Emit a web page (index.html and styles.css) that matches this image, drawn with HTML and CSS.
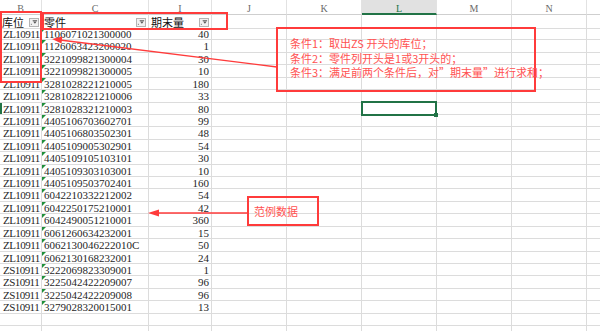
FILE: index.html
```html
<!DOCTYPE html>
<html lang="zh-CN">
<head>
<meta charset="utf-8">
<title>sheet</title>
<link rel="stylesheet" href="styles.css">
</head>
<body>
<div class="page">
  <div class="sheet">
    <div class="row cols">
      <div class="c">B</div><div class="c">C</div><div class="c">I</div><div class="c">J</div><div class="c">K</div><div class="c active">L</div><div class="c">M</div><div class="c">N</div><div class="c"></div>
    </div>
    <div class="row head">
      <div class="c hc"><span class="ht">库位</span><span class="flt"><svg width="9" height="7" viewBox="0 0 9 7"><rect x="1" y="5" width="1" height="1" fill="#555"/><rect x="3" y="1" width="5" height="1" fill="#555"/><path d="M3.5 2.5h4l-2 2.5z" fill="#555"/></svg></span></div>
      <div class="c hc"><span class="ht">零件</span><span class="flt"><svg width="9" height="7" viewBox="0 0 9 7"><rect x="1" y="5" width="1" height="1" fill="#555"/><rect x="3" y="1" width="5" height="1" fill="#555"/><path d="M3.5 2.5h4l-2 2.5z" fill="#555"/></svg></span></div>
      <div class="c hc"><span class="ht">期末量</span><span class="flt"><svg width="9" height="7" viewBox="0 0 9 7"><rect x="1" y="5" width="1" height="1" fill="#555"/><rect x="3" y="1" width="5" height="1" fill="#555"/><path d="M3.5 2.5h4l-2 2.5z" fill="#555"/></svg></span></div>
      <div class="c"></div><div class="c"></div><div class="c"></div><div class="c"></div><div class="c"></div><div class="c"></div>
    </div>
    <div class="row"><div class="c id">ZL10911</div><div class="c code">1106071021300000</div><div class="c num">40</div><div class="c"></div><div class="c"></div><div class="c"></div><div class="c"></div><div class="c"></div><div class="c"></div></div>
    <div class="row"><div class="c id">ZL10911</div><div class="c code">1126063423200020</div><div class="c num">1</div><div class="c"></div><div class="c"></div><div class="c"></div><div class="c"></div><div class="c"></div><div class="c"></div></div>
    <div class="row"><div class="c id">ZL10911</div><div class="c code">3221099821300004</div><div class="c num">30</div><div class="c"></div><div class="c"></div><div class="c"></div><div class="c"></div><div class="c"></div><div class="c"></div></div>
    <div class="row"><div class="c id">ZL10911</div><div class="c code">3221099821300005</div><div class="c num">10</div><div class="c"></div><div class="c"></div><div class="c"></div><div class="c"></div><div class="c"></div><div class="c"></div></div>
    <div class="row"><div class="c id">ZL10911</div><div class="c code">3281028221210005</div><div class="c num">180</div><div class="c"></div><div class="c"></div><div class="c"></div><div class="c"></div><div class="c"></div><div class="c"></div></div>
    <div class="row"><div class="c id">ZL10911</div><div class="c code">3281028221210006</div><div class="c num">33</div><div class="c"></div><div class="c"></div><div class="c"></div><div class="c"></div><div class="c"></div><div class="c"></div></div>
    <div class="row"><div class="c id rowsel">ZL10911</div><div class="c code">3281028321210003</div><div class="c num">80</div><div class="c"></div><div class="c"></div><div class="c sel"></div><div class="c"></div><div class="c"></div><div class="c"></div></div>
    <div class="row"><div class="c id">ZL10911</div><div class="c code">4405106703602701</div><div class="c num">99</div><div class="c"></div><div class="c"></div><div class="c"></div><div class="c"></div><div class="c"></div><div class="c"></div></div>
    <div class="row"><div class="c id">ZL10911</div><div class="c code">4405106803502301</div><div class="c num">48</div><div class="c"></div><div class="c"></div><div class="c"></div><div class="c"></div><div class="c"></div><div class="c"></div></div>
    <div class="row"><div class="c id">ZL10911</div><div class="c code">4405109005302901</div><div class="c num">54</div><div class="c"></div><div class="c"></div><div class="c"></div><div class="c"></div><div class="c"></div><div class="c"></div></div>
    <div class="row"><div class="c id">ZL10911</div><div class="c code">4405109105103101</div><div class="c num">30</div><div class="c"></div><div class="c"></div><div class="c"></div><div class="c"></div><div class="c"></div><div class="c"></div></div>
    <div class="row"><div class="c id">ZL10911</div><div class="c code">4405109303103001</div><div class="c num">10</div><div class="c"></div><div class="c"></div><div class="c"></div><div class="c"></div><div class="c"></div><div class="c"></div></div>
    <div class="row"><div class="c id">ZL10911</div><div class="c code">4405109503702401</div><div class="c num">160</div><div class="c"></div><div class="c"></div><div class="c"></div><div class="c"></div><div class="c"></div><div class="c"></div></div>
    <div class="row"><div class="c id">ZL10911</div><div class="c code">6042210332212002</div><div class="c num">54</div><div class="c"></div><div class="c"></div><div class="c"></div><div class="c"></div><div class="c"></div><div class="c"></div></div>
    <div class="row"><div class="c id">ZL10911</div><div class="c code">6042250175210001</div><div class="c num">42</div><div class="c"></div><div class="c"></div><div class="c"></div><div class="c"></div><div class="c"></div><div class="c"></div></div>
    <div class="row"><div class="c id">ZL10911</div><div class="c code">6042490051210001</div><div class="c num">360</div><div class="c"></div><div class="c"></div><div class="c"></div><div class="c"></div><div class="c"></div><div class="c"></div></div>
    <div class="row"><div class="c id">ZL10911</div><div class="c code">6061260634232001</div><div class="c num">15</div><div class="c"></div><div class="c"></div><div class="c"></div><div class="c"></div><div class="c"></div><div class="c"></div></div>
    <div class="row"><div class="c id">ZL10911</div><div class="c code">6062130046222010C</div><div class="c num">50</div><div class="c"></div><div class="c"></div><div class="c"></div><div class="c"></div><div class="c"></div><div class="c"></div></div>
    <div class="row"><div class="c id">ZL10911</div><div class="c code">6062130168232001</div><div class="c num">24</div><div class="c"></div><div class="c"></div><div class="c"></div><div class="c"></div><div class="c"></div><div class="c"></div></div>
    <div class="row"><div class="c id">ZS10911</div><div class="c code">3222069823309001</div><div class="c num">1</div><div class="c"></div><div class="c"></div><div class="c"></div><div class="c"></div><div class="c"></div><div class="c"></div></div>
    <div class="row"><div class="c id">ZS10911</div><div class="c code">3225042422209007</div><div class="c num">96</div><div class="c"></div><div class="c"></div><div class="c"></div><div class="c"></div><div class="c"></div><div class="c"></div></div>
    <div class="row"><div class="c id">ZS10911</div><div class="c code">3225042422209008</div><div class="c num">96</div><div class="c"></div><div class="c"></div><div class="c"></div><div class="c"></div><div class="c"></div><div class="c"></div></div>
    <div class="row"><div class="c id">ZS10911</div><div class="c code">3279028320015001</div><div class="c num">13</div><div class="c"></div><div class="c"></div><div class="c"></div><div class="c"></div><div class="c"></div><div class="c"></div></div>
    <div class="row"><div class="c"></div><div class="c"></div><div class="c"></div><div class="c"></div><div class="c"></div><div class="c"></div><div class="c"></div><div class="c"></div><div class="c"></div></div>
    <div class="row"><div class="c"></div><div class="c"></div><div class="c"></div><div class="c"></div><div class="c"></div><div class="c"></div><div class="c"></div><div class="c"></div><div class="c"></div></div>
  </div>

  <div class="mark box-id"></div>
  <div class="mark box-head"></div>
  <div class="mark note">
    <p>条件1：取出ZS 开头的库位；</p>
    <p>条件2：零件列开头是1或3开头的；</p>
    <p>条件3：满足前两个条件后，对”期末量”进行求和；</p>
  </div>
  <div class="mark demo">范例数据</div>
  <svg class="arrows" width="600" height="331" viewBox="0 0 600 331">
    <line x1="277" y1="67" x2="60" y2="40" stroke="#ff3b3b" stroke-width="1.4"/>
    <path d="M52 39 L62.3 36.6 L61.5 43.6 Z" fill="#ff3b3b"/>
    <line x1="247" y1="213" x2="157" y2="213" stroke="#ff3b3b" stroke-width="1.6"/>
    <path d="M148 213 L159 209.5 L159 216.5 Z" fill="#ff3b3b"/>
  </svg>
</div>
</body>
</html>
```

FILE: styles.css
```css
html, body {
  margin: 0;
  padding: 0;
  background: #fff;
}
body {
  width: 600px;
  height: 331px;
  overflow: hidden;
}
.page {
  position: relative;
  width: 600px;
  height: 331px;
  overflow: hidden;
}
.sheet {
  display: flex;
  flex-direction: column;
  font-family: "Liberation Serif", serif;
  font-size: 11px;
  color: #1f1f1f;
}
.row {
  display: grid;
  grid-template-columns: 42px 107px 63px 75px 75px 75px 75px 75px 75px;
  height: 12.43px;
  flex: none;
}
.c {
  box-sizing: border-box;
  border-right: 1px solid #dcdcdc;
  border-bottom: 1px solid #dcdcdc;
  overflow: hidden;
  white-space: nowrap;
  line-height: 12px;
  position: relative;
}
.cols {
  height: 15px;
}
.cols .c {
  text-align: center;
  font-size: 10px;
  line-height: 9px;
  padding-top: 4px;
  color: #6a6a6a;
  border-bottom: 1px solid #cfcfcf;
  border-right-color: #e2e2e2;
}
.cols .active {
  background: #e1e1e1;
  border-bottom: 2px solid #217346;
  color: #217346;
}
.head {
  height: 13px;
}
.hc {
  display: flex;
  justify-content: space-between;
  align-items: flex-start;
  padding: 1.5px 1px 0 2px;
  overflow: visible;
  font-family: "Noto Sans CJK SC", sans-serif;
  font-size: 11px;
  color: #111;
}
.ht {
  display: block;
  line-height: 11px;
  height: 11px;
}
.flt {
  display: flex;
  align-items: center;
  justify-content: center;
  width: 10px;
  height: 9px;
  box-sizing: border-box;
  border: 1px solid #b4b4b4;
  background: #f1f1f1;
  margin: 1px 1px 0 0;
}
.id {
  padding-left: 3px;
  letter-spacing: -0.55px;
}
.code {
  padding-left: 2px;
}
.code::before {
  content: "";
  position: absolute;
  left: 0;
  top: 0;
  border-top: 4px solid #1f8f3a;
  border-right: 4px solid transparent;
}
.num {
  text-align: right;
  padding-right: 2px;
}
.rowsel {
  box-shadow: inset 2px 0 0 #217346;
}
.sel {
  overflow: visible;
}
.sel::after {
  content: "";
  position: absolute;
  left: -1px;
  top: -2px;
  right: -1px;
  bottom: -2px;
  border: 2px solid #217346;
  z-index: 2;
}
.sel::before {
  content: "";
  position: absolute;
  right: -2px;
  bottom: -3px;
  width: 4px;
  height: 4px;
  background: #217346;
  z-index: 3;
}
.mark {
  position: absolute;
  box-sizing: border-box;
  border: 2px solid #ff3b3b;
  z-index: 4;
}
.box-id {
  left: 0;
  top: 11px;
  width: 42px;
  height: 72px;
}
.box-head {
  left: 42px;
  top: 12px;
  width: 186px;
  height: 18px;
}
.note {
  left: 276px;
  top: 27px;
  width: 260px;
  height: 65px;
  padding: 7px 0 0 12px;
  font-family: "Noto Sans CJK SC", sans-serif;
  font-size: 11px;
  line-height: 14.5px;
  color: #ff5252;
}
.note p {
  margin: 0;
  white-space: nowrap;
}
.demo {
  left: 247px;
  top: 196px;
  width: 72px;
  height: 30px;
  padding: 6px 0 0 5px;
  font-family: "Noto Sans CJK SC", sans-serif;
  font-size: 11px;
  line-height: 14px;
  color: #ff5252;
}
.arrows {
  position: absolute;
  left: 0;
  top: 0;
  z-index: 5;
  pointer-events: none;
}
```
